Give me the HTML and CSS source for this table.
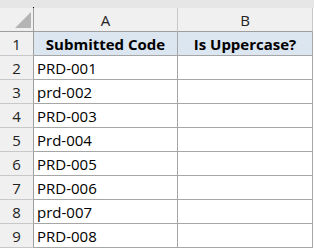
FILE: index.html
```html
<!DOCTYPE html>
<html>
<head>
<meta charset="utf-8">
<link rel="stylesheet" href="styles.css">
</head>
<body>
<div class="sheet">
  <div class="topbar"><span class="dot"></span></div>
  <div class="grid">
    <div class="corner"><svg width="16" height="16" viewBox="0 0 16 16"><polygon points="16,0 16,16 0,16" fill="#b4b4b4"/></svg></div>
    <div class="colhead">A</div>
    <div class="colhead">B</div>

    <div class="rowhead">1</div><div class="cell hdr">Submitted Code</div><div class="cell hdr">Is Uppercase?</div>
    <div class="rowhead">2</div><div class="cell">PRD-001</div><div class="cell"></div>
    <div class="rowhead">3</div><div class="cell">prd-002</div><div class="cell"></div>
    <div class="rowhead">4</div><div class="cell">PRD-003</div><div class="cell"></div>
    <div class="rowhead">5</div><div class="cell">Prd-004</div><div class="cell"></div>
    <div class="rowhead">6</div><div class="cell">PRD-005</div><div class="cell"></div>
    <div class="rowhead">7</div><div class="cell">PRD-006</div><div class="cell"></div>
    <div class="rowhead">8</div><div class="cell">prd-007</div><div class="cell"></div>
    <div class="rowhead">9</div><div class="cell">PRD-008</div><div class="cell"></div>
  </div>
</div>
</body>
</html>
```

FILE: styles.css
```css
html, body {
  margin: 0;
  padding: 0;
  background: #ffffff;
}

.sheet {
  width: 314px;
  font-family: "Open Sans", "Liberation Sans", sans-serif;
  font-size: 15px;
  color: #000000;
}

.topbar {
  height: 8px;
  background: #e6e6e6;
  display: flex;
  align-items: flex-end;
}

.dot {
  width: 1px;
  height: 1px;
  margin-left: 33px;
  background: #000000;
}

.grid {
  display: grid;
  grid-template-columns: 34px 144px 135px;
  grid-auto-rows: 24px;
}

.grid > div {
  box-sizing: border-box;
  padding-top: 1px;
  line-height: 22px;
  white-space: nowrap;
  overflow: hidden;
}

.corner {
  background: #f0f0f0;
  border-right: 1px solid #9e9e9e;
  border-bottom: 1px solid #9e9e9e;
  display: flex;
  justify-content: flex-end;
  align-items: flex-end;
  padding: 0 2px 3px 0;
}

.corner svg {
  display: block;
}

.colhead {
  background: #f0f0f0;
  border-right: 1px solid #c8c8c8;
  border-bottom: 1px solid #9e9e9e;
  text-align: center;
  color: #222222;
}

.rowhead {
  background: #f0f0f0;
  border-right: 1px solid #9e9e9e;
  border-bottom: 1px solid #c8c8c8;
  text-align: center;
  color: #222222;
}

.cell {
  border-right: 1px solid #a6a6a6;
  border-bottom: 1px solid #a6a6a6;
  padding-left: 3px;
}

.cell.hdr {
  background: #dce6f1;
  font-weight: 700;
  text-align: center;
  padding-left: 0;
}
```
